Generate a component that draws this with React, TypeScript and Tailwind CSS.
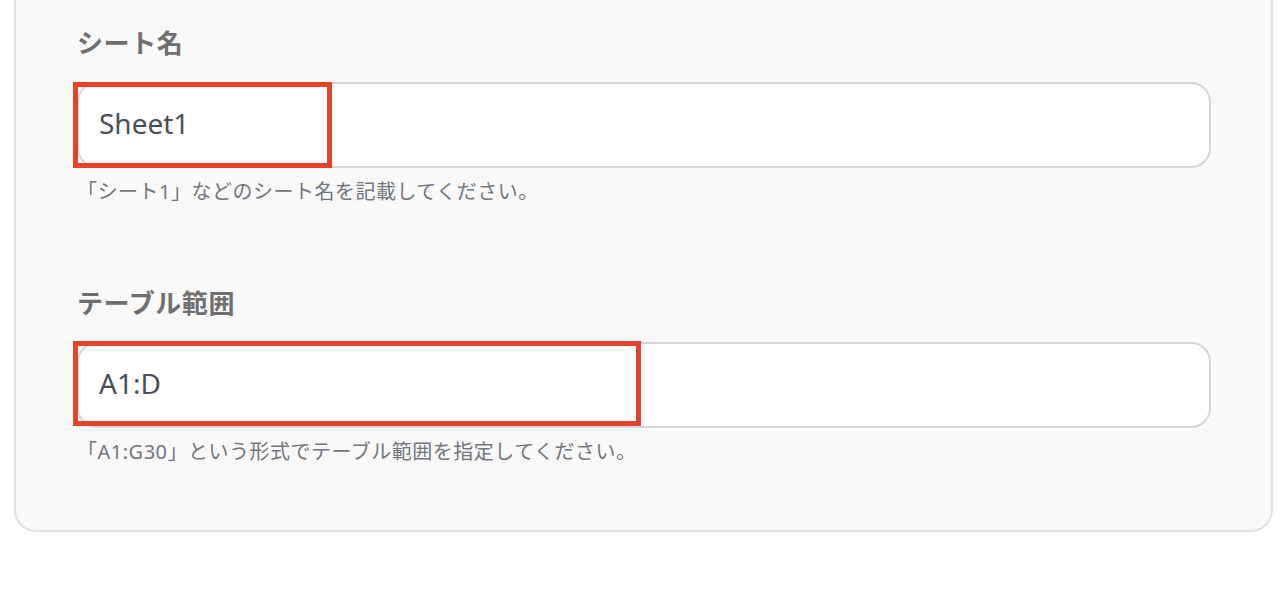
import React from 'react';

const FieldBlock = ({ label, value, help, markWidth, markClass }: { label: string; value: string; help: string; markWidth: string; markClass: string }) => (
  <div className="flex flex-col">
    <h3 className="text-[26px] leading-[36px] font-bold tracking-[0.6px] text-[#6f6f6f]">{label}</h3>
    <div className="relative mt-[21px]">
      <div className="h-[86px] w-full rounded-[20px] border-2 border-[#d3d6db] bg-white flex items-center pl-[20px] pb-[4px]">
        <span className="text-[28px] text-[#4a4f57]">{value}</span>
      </div>
      {/* red highlight over the input */}
      <div className={`absolute left-[-4px] border-[5px] border-[#e6432c] ${markWidth} ${markClass}`} />
    </div>
    <p className="mt-[10px] text-[20px] leading-[28px] tracking-[0.5px] text-[#72767d]">{help}</p>
  </div>
);

export default function App() {
  return (
    <div className="w-[1284px] h-[600px] bg-white" style={{ fontFamily: '"Noto Sans", "Noto Sans CJK JP", sans-serif' }}>
      <div className="ml-[14px] w-[1259px] rounded-b-[22px] border-x-2 border-b-2 border-[#dfe1e5] bg-[#f9f9f9] pl-[61px] pr-[60px] pt-[25px] pb-[64px]">
        <FieldBlock
          label="シート名"
          value="Sheet1"
          help="「シート1」などのシート名を記載してください。"
          markWidth="w-[259px]"
          markClass="top-0 h-[86px]"
        />
        <div className="mt-[79px]">
          <FieldBlock
            label="テーブル範囲"
            value="A1:D"
            help="「A1:G30」という形式でテーブル範囲を指定してください。"
            markWidth="w-[568px]"
            markClass="top-[-1px] h-[85px]"
          />
        </div>
      </div>
    </div>
  );
}
